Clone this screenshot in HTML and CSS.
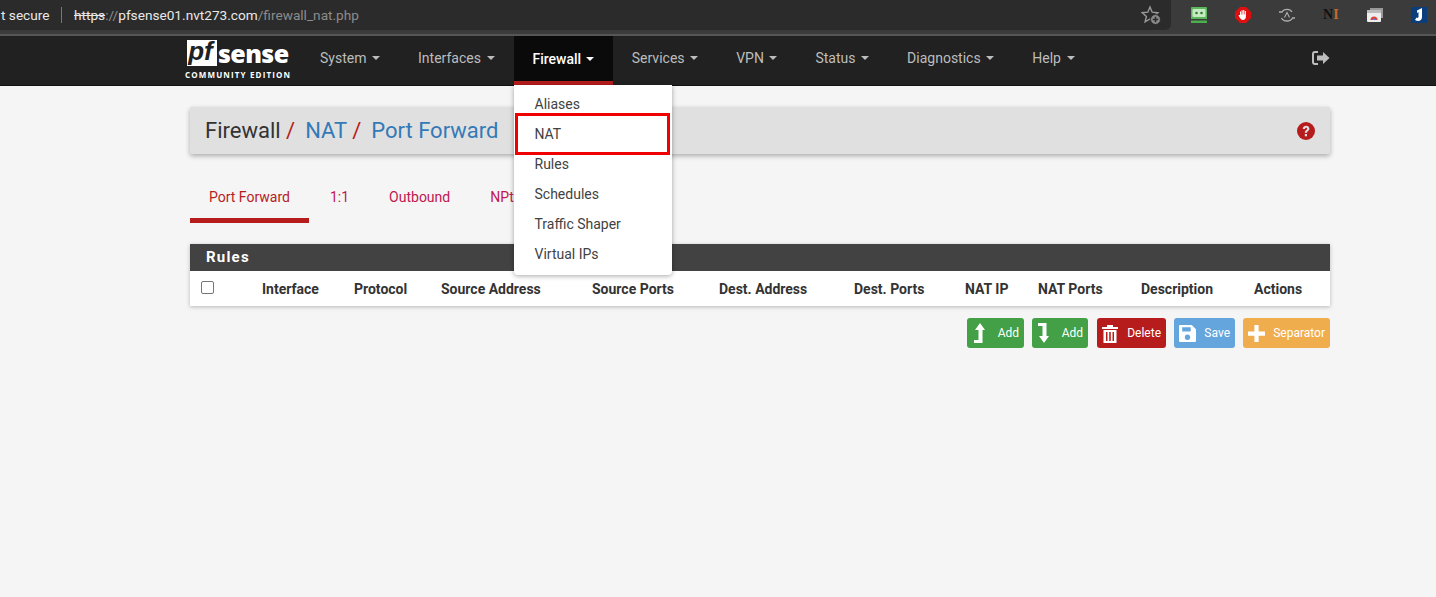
FILE: index.html
```html
<!DOCTYPE html>
<html lang="en">
<head>
    <meta charset="UTF-8">
    <title>pfSense - Firewall: NAT: Port Forward</title>
    <link rel="stylesheet" href="styles.css">
</head>
<body>
    <div class="browser-bar">
        <div class="address-box">
            <span class="secure">t secure</span>
            <span class="url"><s class="scheme">https</s><span class="dim">://</span>pfsense01.nvt273.com<span class="dim">/firewall_nat.php</span></span>
            <svg class="star" viewBox="0 0 20 20" width="20" height="20"><path d="M9 2l2.200 5.200 5.600.5-4.200 3.700 1.300 5.500L9 14l-4.900 2.900 1.300-5.500-4.200-3.700 5.600-.5z" fill="none" stroke="#9a9a9a" stroke-width="1.400"/><circle cx="14.500" cy="14.500" r="5" fill="#8a8a8a" stroke="#2b2b2b"/><path d="M11.800 14.500h5.400M14.500 11.800v5.400" stroke="#2b2b2b" stroke-width="1.500"/></svg>
        </div>
        <div class="extensions">
            <svg class="ext ext-robo" viewBox="0 0 16 16" width="16" height="16"><path d="M1 0h14a1 1 0 0 1 1 1v11H0V1a1 1 0 0 1 1-1z" fill="#5cb85c"/><rect x="1.500" y="2" width="13" height="8" rx="1" fill="#c8eac2"/><circle cx="5.500" cy="6" r="1.300" fill="#2e7d32"/><circle cx="10.500" cy="6" r="1.300" fill="#2e7d32"/><rect y="13.500" width="16" height="2.500" fill="#4cae4c"/></svg>
            <svg class="ext ext-block" viewBox="0 0 16 16" width="16" height="16"><path d="M5 0h6l5 5v6l-5 5H5l-5-5V5z" fill="#e01010"/><circle cx="8" cy="8" r="7" fill="#e01010"/><path d="M5 8V4.500h1.100V7.500h.5V3.200h1.100v4.300h.5V3h1.100v4.500h.5V4h1.100v5.500c0 2.200-1.200 3.500-3 3.500-1.500 0-2.200-1-3.700-3.200l-.7-1.500.9-.4z" fill="#fff"/></svg>
            <svg class="ext ext-arc" viewBox="0 0 16 16" width="16" height="16"><path d="M0 5h3C5 1.500 11 1.500 13 5M2.500 11c2 4 9 4 11 0h2.500" fill="none" stroke="#b0b0b0" stroke-width="1.300"/><path d="M5.500 10.500l2.500-5 2.500 5" fill="none" stroke="#b0b0b0" stroke-width="1.100"/></svg>
            <span class="ext ext-note">N<span class="ext-note-bar">I</span></span>
            <svg class="ext ext-tabs" viewBox="0 0 16 16" width="16" height="16"><rect x="3" y="1" width="13" height="10" fill="#999"/><rect y="3" width="14" height="12" rx="1" fill="#eee"/><rect y="3" width="14" height="3" fill="#bbb"/><path d="M3.500 13a3.500 3.500 0 0 1 7 0z" fill="#d9453a"/><path d="M5.500 13a1.500 1.500 0 0 1 3 0z" fill="#4285f4"/></svg>
            <svg class="ext ext-j" viewBox="0 0 16 16" width="16" height="16"><rect width="16" height="16" fill="#0b3d7a"/><path d="M11 1v9c0 4-4 5-7 3l1.500-2.500c1.200.8 2 .3 2-.8V5L6 6V3.500z" fill="#fff"/></svg>
        </div>
    </div>

    <nav class="navbar">
        <div class="logo">
            <div class="logo-top"><span class="logo-pf">pf</span><span class="logo-sense">sense</span></div>
            <div class="logo-sub">COMMUNITY EDITION</div>
        </div>
        <ul class="nav-menu">
            <li>System <i class="caret"></i></li>
            <li>Interfaces <i class="caret"></i></li>
            <li class="active">Firewall <i class="caret"></i></li>
            <li>Services <i class="caret"></i></li>
            <li>VPN <i class="caret"></i></li>
            <li>Status <i class="caret"></i></li>
            <li>Diagnostics <i class="caret"></i></li>
            <li>Help <i class="caret"></i></li>
        </ul>
        <svg class="logout" viewBox="0 0 18 14" width="18" height="14"><path d="M6 1H3a2 2 0 0 0-2 2v8a2 2 0 0 0 2 2h3" fill="none" stroke="#bdbdbd" stroke-width="2"/><path d="M5 4.500h6V1l6.500 6-6.500 6V9.500H5z" fill="#bdbdbd"/></svg>
        <ul class="dropdown">
            <li>Aliases</li>
            <li>NAT</li>
            <li>Rules</li>
            <li>Schedules</li>
            <li>Traffic Shaper</li>
            <li>Virtual IPs</li>
        </ul>
        <div class="highlight"></div>
    </nav>

    <main class="content">
        <div class="page-header">
            <h1>Firewall <em>/</em> <a>NAT</a> <em>/</em> <a>Port Forward</a></h1>
            <svg class="help" viewBox="0 0 18 18" width="18" height="18"><circle cx="9" cy="9" r="9" fill="#b71c1c"/><path d="M5.800 7c0-4.300 6.600-4.300 6.600-.300 0 2.300-2.400 2.200-2.400 4H7.800c0-2.700 2.300-2.600 2.300-4 0-1.300-2-1.300-2.100.300z" fill="#e0e0e0"/><rect x="7.800" y="12" width="2.200" height="2.300" fill="#e0e0e0"/></svg>
        </div>

        <ul class="tabs">
            <li class="active">Port Forward</li>
            <li>1:1</li>
            <li>Outbound</li>
            <li>NPt</li>
        </ul>

        <section class="panel">
            <h2 class="panel-title">Rules</h2>
            <div class="rules-head">
                <span><span class="checkbox"></span></span>
                <span>Interface</span>
                <span>Protocol</span>
                <span>Source Address</span>
                <span>Source Ports</span>
                <span>Dest. Address</span>
                <span>Dest. Ports</span>
                <span>NAT IP</span>
                <span>NAT Ports</span>
                <span>Description</span>
                <span>Actions</span>
            </div>
        </section>

        <div class="actions">
            <button class="btn btn-green">
                <svg viewBox="0 0 12 20" width="12" height="20"><path d="M7 0l5 7H9.500v13H1v-3h4.500V7H2z" fill="#fff"/></svg>
                Add
            </button>
            <button class="btn btn-green">
                <svg viewBox="0 0 12 20" width="12" height="20"><path d="M1 0h8.500v13H12l-5 7-5-7h3.500V3H1z" fill="#fff"/></svg>
                Add
            </button>
            <button class="btn btn-red">
                <svg viewBox="0 0 16 19" width="16" height="19"><path d="M0 3h5V1h6v2h5v2H0z" fill="#fff"/><path d="M1.500 6h13v13h-13zM4 8v9h1.500V8zM7.200 8v9h1.600V8zM10.500 8v9H12V8z" fill="#fff" fill-rule="evenodd"/></svg>
                Delete
            </button>
            <button class="btn btn-blue">
                <svg viewBox="0 0 16 16" width="17" height="17"><path d="M1 0h11l4 4v11a1 1 0 0 1-1 1H1a1 1 0 0 1-1-1V1a1 1 0 0 1 1-1zM3 2v4h8V2zM8 9a2.500 2.500 0 1 0 0 5 2.500 2.500 0 0 0 0-5z" fill="#fff" fill-rule="evenodd"/></svg>
                Save
            </button>
            <button class="btn btn-orange">
                <svg viewBox="0 0 16 16" width="17" height="17"><path d="M6 0h4v6h6v4h-6v6H6v-6H0V6h6z" fill="#fff"/></svg>
                Separator
            </button>
        </div>
    </main>
</body>
</html>
```

FILE: styles.css
```css
* {
    box-sizing: border-box;
}
html, body {
    height: 100%;
}
body {
    margin: 0;
    overflow: hidden;
    font-family: Roboto, sans-serif;
    font-size: 14px;
    background-color: #f5f5f5;
    color: #333;
}
ul {
    list-style: none;
    margin: 0;
    padding: 0;
}

/* browser toolbar */
.browser-bar {
    display: flex;
    height: 36px;
    background: #3b3b3b;
    border-bottom: 2px solid #565656;
}
.address-box {
    display: flex;
    flex: none;
    align-items: center;
    width: 1171px;
    height: 30px;
    background: #2b2b2b;
    border-bottom-right-radius: 6px;
    color: #e8e8e8;
    font-size: 13.650px;
}
.secure {
    width: 62px;
    padding-left: 1px;
    border-right: 1px solid #777;
    line-height: 16px;
    white-space: nowrap;
}
.url {
    margin-left: 12px;
    flex: 1;
}
.scheme {
    color: #e8e8e8;
}
.dim {
    color: #8c8c8c;
}
.star {
    margin-right: 10px;
}
.extensions {
    display: flex;
    flex: 1;
    align-items: center;
    height: 30px;
    padding-left: 20px;
}
.ext {
    flex: none;
    margin-right: 28px;
}
.ext-note {
    width: 16px;
    font-family: "Liberation Serif", serif;
    font-weight: bold;
    font-size: 14px;
    color: #111;
    white-space: nowrap;
}
.ext-note-bar {
    color: #c46a2b;
}
.ext-j {
    margin-right: 0;
}

/* navbar */
.navbar {
    position: relative;
    display: flex;
    align-items: stretch;
    height: 50px;
    padding-left: 185px;
    background: #212121;
    border-bottom: 1px solid #111;
}
.logo {
    width: 110px;
    padding-top: 4px;
    color: #fff;
}
.logo-top {
    display: flex;
    align-items: center;
    height: 26px;
    padding-left: 2px;
}
.logo-pf {
    width: 30px;
    height: 26px;
    padding-right: 3px;
    background: #fff;
    color: #212121;
    font: italic bold 26px/22px "Liberation Sans", sans-serif;
    text-align: center;
}
.logo-sense {
    margin-left: 1px;
    font: 800 25px/26px "Open Sans", sans-serif;
    letter-spacing: -0.6px;
}
.logo-sub {
    margin-top: 3px;
    font: bold 8px/11px "Open Sans", sans-serif;
    letter-spacing: 1.150px;
    white-space: nowrap;
}
.nav-menu {
    display: flex;
    margin-left: 6px;
}
.nav-menu li {
    display: flex;
    align-items: center;
    gap: 5.600px;
    padding: 0 19px 1px;
    color: #bdbdbd;
    white-space: nowrap;
    border-bottom: 4px solid transparent;
}
.nav-menu li.active {
    gap: 4.600px;
    background: #0a0a0a;
    color: #fff;
    font-weight: 500;
    padding-bottom: 0;
    border-bottom-color: #b71c1c;
}
.caret {
    width: 0;
    height: 0;
    border-top: 4px solid currentColor;
    border-left: 4px solid transparent;
    border-right: 4px solid transparent;
}
.logout {
    position: absolute;
    left: 1312px;
    top: 15px;
}
.dropdown {
    position: absolute;
    left: 514px;
    top: 49px;
    z-index: 5;
    width: 158px;
    padding: 4px 0 6px;
    background: #fff;
    border-radius: 0 0 4px 4px;
    box-shadow: 0 1px 5px rgba(0, 0, 0, 0.35);
}
.dropdown li {
    height: 30px;
    padding-left: 20.500px;
    line-height: 30px;
    color: #424242;
}
.highlight {
    position: absolute;
    left: 515px;
    top: 77px;
    z-index: 6;
    width: 155px;
    height: 42px;
    border: 3px solid #f00000;
}

/* page */
.content {
    width: 1140px;
    margin-left: 190px;
    padding-top: 21px;
}
.page-header {
    display: flex;
    align-items: center;
    justify-content: space-between;
    height: 47px;
    padding: 0 15px;
    background: #e0e0e0;
    border-radius: 2px;
    box-shadow: 0 2px 5px rgba(0, 0, 0, 0.3);
}
.page-header h1 {
    margin: 0;
    font-size: 22px;
    font-weight: 400;
    color: #333;
}
.page-header em {
    font-style: normal;
    color: #b71c1c;
    margin-right: 4.500px;
}
.page-header a {
    color: #337ab7;
}
.tabs {
    display: flex;
    height: 48px;
    margin-top: 21px;
}
.tabs li {
    padding: 12px 19px 0 21px;
    color: #c0174f;
    line-height: 20px;
}
.tabs li.active {
    padding: 12px 19px 0;
    color: #b71c1c;
    border-bottom: 5px solid #b71c1c;
}
.panel {
    margin-top: 21px;
    background: #fff;
    box-shadow: 0 1px 4px rgba(0, 0, 0, 0.25);
}
.panel-title {
    height: 27px;
    margin: 0;
    padding-left: 16px;
    background: #424242;
    color: #fff;
    font-size: 15px;
    font-weight: 700;
    line-height: 27px;
    letter-spacing: 1.200px;
}
.rules-head {
    display: grid;
    grid-template-columns: 72px 92px 87px 151px 127px 135px 111px 73px 103px 113px 1fr;
    align-items: center;
    height: 35px;
    font-size: 14px;
    font-weight: 700;
    white-space: nowrap;
}
.rules-head > span:first-child {
    padding-left: 11px;
}
.checkbox {
    display: block;
    width: 13px;
    height: 13px;
    margin-top: -3px;
    background: #fff;
    border: 1px solid #767676;
    border-radius: 2px;
}
.actions {
    display: flex;
    justify-content: flex-end;
    gap: 8px;
    margin-top: 12px;
}
.btn {
    display: flex;
    align-items: center;
    justify-content: space-between;
    height: 30px;
    padding: 0 5px;
    border: none;
    border-radius: 3px;
    color: #fff;
    font-family: Roboto, sans-serif;
    font-size: 12px;
    font-weight: 400;
}
.btn:nth-child(1) {
    width: 57px;
    padding-left: 6px;
}
.btn:nth-child(2) {
    width: 56px;
}
.btn:nth-child(3) {
    width: 69px;
    margin-left: 1px;
}
.btn:nth-child(4) {
    width: 61px;
}
.btn:nth-child(5) {
    width: 87px;
}
.btn-green {
    background: #43a047;
}
.btn-red {
    background: #b71c1c;
}
.btn-blue {
    background: #64a5de;
}
.btn-orange {
    background: #f0ad4e;
}
```
